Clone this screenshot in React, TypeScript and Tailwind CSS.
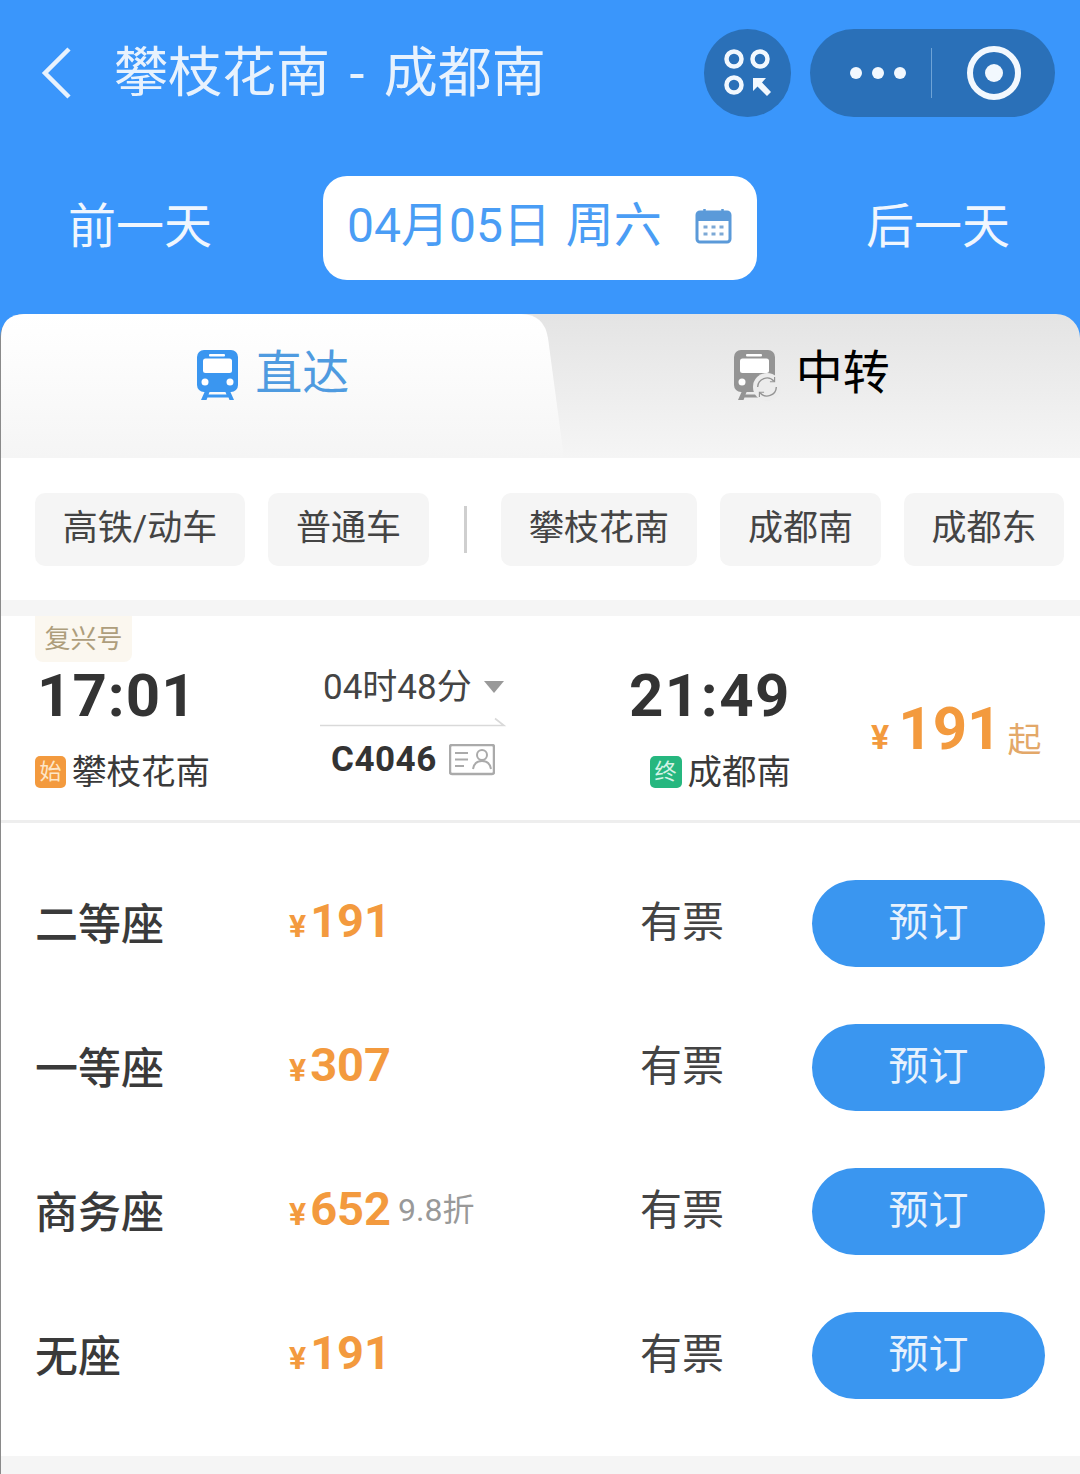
const seats = [
  { name: "二等座", price: "191" },
  { name: "一等座", price: "307" },
  { name: "商务座", price: "652", discount: "9.8折" },
  { name: "无座", price: "191" },
]

const font = { fontFamily: '"Roboto", "Noto Sans CJK SC", sans-serif' }

function TrainIcon({ color, className }: { color: string; className: string }) {
  return (
    <svg viewBox="0 0 42 50" className={className}>
      <path d="M7 0h27a7 7 0 0 1 7 7v28a7 7 0 0 1-7 7H7a7 7 0 0 1-7-7V7a7 7 0 0 1 7-7z" fill={color} />
      <rect x="12" y="4" width="16" height="2.500" rx="1" fill="#fff" />
      <rect x="6" y="8.500" width="29" height="14.500" rx="2.500" fill="#fff" />
      <circle cx="8" cy="32" r="3.500" fill="#fff" />
      <circle cx="33" cy="32" r="3.500" fill="#fff" />
      <path d="M8 41h5l-1.500 3.500h18L28 41h5l4 9h-4.500l-1-2.500h-21l-1 2.500H4z" fill={color} />
    </svg>
  )
}

export default function App() {
  return (
    <div className="w-[1080px] h-[1474px] overflow-hidden bg-[#f5f5f5]" style={font}>
      <div className="bg-[#3a96fb]">
        {/* nav bar */}
        <div className="flex items-center h-[146px] pl-[40px] pr-[25px]">
          <svg viewBox="0 0 32 52" className="w-[32px] h-[52px] shrink-0">
            <path d="M29 2 5 26l24 24" fill="none" stroke="#e8f2fd" strokeWidth="4.500" />
          </svg>
          <span className="ml-[42px] mt-[2px] text-[54px] leading-none text-[#e8f2fd] whitespace-nowrap [word-spacing:6px]">攀枝花南 - 成都南</span>
          <div className="ml-auto flex items-center gap-[19px]">
            <div className="w-[87px] h-[88px] rounded-full bg-[#2a70b8] flex items-center justify-center">
              <svg viewBox="0 0 48 48" className="w-[48px] h-[48px]">
                <circle cx="10" cy="10" r="7.500" fill="none" stroke="#f2f8fe" strokeWidth="4.500" />
                <circle cx="36" cy="10" r="7.500" fill="none" stroke="#f2f8fe" strokeWidth="4.500" />
                <circle cx="10" cy="36" r="7.500" fill="none" stroke="#f2f8fe" strokeWidth="4.500" />
                <path d="M29 29h13l-4 4.500L47 43l-4 4-9.500-9.500L29 42z" fill="#f2f8fe" />
              </svg>
            </div>
            <div className="w-[245px] h-[88px] rounded-full bg-[#2a70b8] flex items-center">
              <div className="w-[121px] flex items-center justify-end gap-[10px] pr-[25px]">
                <span className="w-[12px] h-[12px] rounded-full bg-[#f2f8fe]" />
                <span className="w-[12px] h-[12px] rounded-full bg-[#f2f8fe]" />
                <span className="w-[12px] h-[12px] rounded-full bg-[#f2f8fe]" />
              </div>
              <div className="w-px h-[50px] bg-[#6ea3d6]" />
              <div className="flex-1 flex items-center justify-center">
                <div className="w-[54px] h-[54px] rounded-full border-[6px] border-[#f2f8fe] flex items-center justify-center">
                  <span className="w-[18px] h-[18px] rounded-full bg-[#f2f8fe]" />
                </div>
              </div>
            </div>
          </div>
        </div>

        {/* date switcher */}
        <div className="flex items-center h-[168px] pb-[7px]">
          <div className="w-[323px] pl-[68px] text-[48px] leading-none text-[#f0f6fe]">前一天</div>
          <div className="w-[434px] h-[104px] mt-[2px] rounded-[24px] bg-white flex items-center pl-[24px] pr-[25px]">
            <span className="mt-[-4px] text-[48px] leading-none text-[#4a9df5] whitespace-nowrap [word-spacing:3px]">04月05日 周六</span>
            <svg viewBox="0 0 36 36" className="ml-auto mt-[-3px] w-[37px] h-[36px]">
              <rect x="1.500" y="4" width="33" height="30" rx="3" fill="none" stroke="#5b9ad9" strokeWidth="3" />
              <path d="M3 4h30a2 2 0 0 1 2 2v7H1V6a2 2 0 0 1 2-2z" fill="#5b9ad9" />
              <path d="M9 1v6M27 1v6" stroke="#5b9ad9" strokeWidth="2.500" />
              <path d="M8 19h4M16 19h4M24 19h4M8 26h4M16 26h4M24 26h4" stroke="#7da9d6" strokeWidth="3" />
            </svg>
          </div>
          <div className="flex-1 pl-[109px] text-[48px] leading-none text-[#f0f6fe]">后一天</div>
        </div>

        {/* tabs */}
        <div className="relative h-[144px] rounded-t-[24px] border-l border-[#8a8a8a] bg-gradient-to-b from-[#e4e4e4] to-[#f5f5f5] grid grid-cols-2">
          <svg viewBox="0 0 565 144" className="absolute left-0 top-0 w-[565px] h-[144px]">
            <defs>
              <linearGradient id="tabFill" x1="0" y1="0" x2="0" y2="1">
                <stop offset="0" stopColor="#ffffff" />
                <stop offset="0.35" stopColor="#fcfcfc" />
                <stop offset="1" stopColor="#f5f5f5" />
              </linearGradient>
            </defs>
            <path d="M0 144V24Q0 0 24 0H520Q543 0 547 24L563 144z" fill="url(#tabFill)" />
          </svg>
          <div className="relative flex items-start justify-center gap-[16px] pt-[35px] pl-[5px]">
            <TrainIcon color="#3a96f0" className="w-[42px] h-[50px] mt-[1px]" />
            <span className="text-[47px] leading-[48px] text-[#4f9be0]">直达</span>
          </div>
          <div className="relative flex items-start justify-center gap-[17px] pt-[35px] pl-[3px]">
            <div className="relative w-[45px] h-[50px] mt-[1px]">
              <TrainIcon color="#949494" className="w-[42px] h-[50px]" />
              <svg viewBox="0 0 24 24" className="absolute right-[-2px] bottom-[-1px] w-[28px] h-[28px]">
                <circle cx="12" cy="12" r="12" fill="#ececec" />
                <path d="M4 12a8 8 0 0 1 14-5M20 12a8 8 0 0 1-14 5" fill="none" stroke="#949494" strokeWidth="1.200" />
                <path d="M18.500 3.500v4h-4M5.500 20.500v-4h4" fill="none" stroke="#949494" strokeWidth="1" />
              </svg>
            </div>
            <span className="text-[47px] leading-[48px] text-black">中转</span>
          </div>
        </div>
      </div>

      <div className="border-l border-[#8a8a8a] h-[1016px] flex flex-col">
        {/* filters */}
        <div className="h-[142px] bg-white flex items-center pl-[34px] text-[35px] text-[#444]">
          <div className="w-[210px] h-[73px] rounded-[10px] bg-[#f5f5f5] flex items-center justify-center">高铁/动车</div>
          <div className="w-[161px] h-[73px] ml-[23px] rounded-[10px] bg-[#f5f5f5] flex items-center justify-center">普通车</div>
          <div className="w-[3px] h-[47px] ml-[35px] bg-[#cfcfcf]" />
          <div className="w-[196px] h-[73px] ml-[34px] rounded-[10px] bg-[#f5f5f5] flex items-center justify-center">攀枝花南</div>
          <div className="w-[161px] h-[73px] ml-[23px] rounded-[10px] bg-[#f5f5f5] flex items-center justify-center">成都南</div>
          <div className="w-[160px] h-[73px] ml-[23px] rounded-[10px] bg-[#f5f5f5] flex items-center justify-center">成都东</div>
        </div>

        {/* train summary */}
        <div className="mt-[16px] h-[207px] bg-white border-b-[3px] border-[#eeeeee] pl-[34px]">
          <div className="w-[97px] h-[46px] rounded-b-[8px] bg-[#fbf7ef] flex items-center justify-center text-[26px] leading-none text-[#ae9e7c]">复兴号</div>
          <div className="flex">
            <div className="w-[285px]">
              <div className="h-[66px] pl-[2px] mt-[1px] text-[60px] leading-[66px] font-bold tracking-[1px] text-[#333]">17:01</div>
              <div className="mt-[18px] flex items-center gap-[6px]">
                <span className="w-[31px] h-[32px] rounded-[5px] bg-[#f39a3e] flex items-center justify-center text-[22px] leading-none text-[#fde6c8]">始</span>
                <span className="text-[34.5px] leading-[50px] text-[#3a3a3a]">攀枝花南</span>
              </div>
            </div>
            <div className="w-[187px] mt-[5px]">
              <div className="flex items-center h-[40px] pl-[3px]">
                <span className="text-[35px] leading-none text-[#444]">04时48分</span>
                <span className="ml-[12px] border-x-[10px] border-t-[12px] border-x-transparent border-t-[#999]" />
              </div>
              <svg viewBox="0 0 187 10" className="mt-[10px] w-[187px] h-[10px] block">
                <path d="M0 8.500h184l-9-7" fill="none" stroke="#d9d9d9" strokeWidth="1.600" />
              </svg>
              <div className="mt-[13px] flex items-center pl-[11px]">
                <span className="text-[35px] leading-[40px] font-bold tracking-[0.5px] text-[#333]">C4046</span>
                <svg viewBox="0 0 46 32" className="ml-[12px] w-[46px] h-[32px]">
                  <rect x="1" y="1" width="44" height="29" rx="2" fill="none" stroke="#aaa" strokeWidth="2.500" />
                  <path d="M6 9h13M6 15.500h13M6 22h9" stroke="#aaa" strokeWidth="2" />
                  <circle cx="33" cy="11" r="5" fill="none" stroke="#aaa" strokeWidth="2" />
                  <path d="M24 25c1-6 5-8 9-8s8 2 9 8" fill="none" stroke="#aaa" strokeWidth="2" />
                </svg>
              </div>
            </div>
            <div className="w-[284px] flex flex-col items-end">
              <div className="h-[66px] mt-[1px] text-[60px] leading-[66px] font-bold tracking-[1.500px] text-[#333]">21:49</div>
              <div className="mt-[18px] flex items-center gap-[6px]">
                <span className="w-[32px] h-[32px] rounded-[5px] bg-[#26b77f] flex items-center justify-center text-[22px] leading-none text-[#d5f3e6]">终</span>
                <span className="text-[34.5px] leading-[50px] text-[#3a3a3a]">成都南</span>
              </div>
            </div>
            <div className="ml-[80px] mt-[32px] flex items-baseline text-[#f39a3e] whitespace-nowrap h-[70px]">
              <span className="text-[34px] leading-none font-bold">¥</span>
              <span className="ml-[9px] text-[60px] leading-[70px] font-bold">191</span>
              <span className="ml-[6px] translate-y-[3px] text-[34px] leading-none text-[#e3a869]">起</span>
            </div>
          </div>
        </div>

        {/* seats */}
        <div className="bg-white pt-[28px] pb-[29px]">
          {seats.map((seat) => (
            <div key={seat.name} className="flex items-center h-[144px] pl-[34px]">
              <div className="w-[254px] mt-[4px] text-[43px] leading-none font-medium text-[#3a3a3a]">{seat.name}</div>
              <div className="w-[351px] flex items-baseline mt-[-6px] text-[#f39a3e]">
                <span className="text-[32px] leading-none font-bold">¥</span>
                <span className="ml-[4px] text-[47px] leading-none font-bold">{seat.price}</span>
                {seat.discount && <span className="ml-[7px] -translate-y-[4px] text-[32px] leading-none text-[#999]">{seat.discount}</span>}
              </div>
              <div className="w-[172px] text-[42px] leading-none text-[#444]">有票</div>
              <button className="w-[233px] h-[87px] rounded-full bg-[#3a96f0] text-[40px] leading-none text-[#e8f2fd]">预订</button>
            </div>
          ))}
        </div>
      </div>
    </div>
  )
}
